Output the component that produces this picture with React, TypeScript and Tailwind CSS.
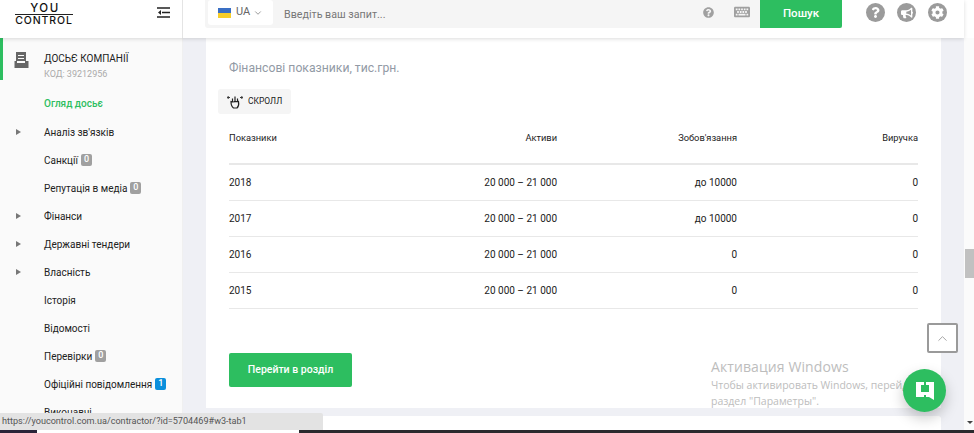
import React from 'react'
import { FaQuestionCircle, FaKeyboard, FaBullhorn, FaCog, FaQuestion } from 'react-icons/fa'
import { LuChevronDown, LuChevronUp } from 'react-icons/lu'

const rows = [
  { year: '2018', assets: '20 000 – 21 000', debts: 'до 10000', income: '0' },
  { year: '2017', assets: '20 000 – 21 000', debts: 'до 10000', income: '0' },
  { year: '2016', assets: '20 000 – 21 000', debts: '0', income: '0' },
  { year: '2015', assets: '20 000 – 21 000', debts: '0', income: '0' },
]

const menu = [
  { label: 'Аналіз зв\'язків', arrow: true },
  { label: 'Санкції', badge: '0' },
  { label: 'Репутація в медіа', badge: '0' },
  { label: 'Фінанси', arrow: true },
  { label: 'Державні тендери', arrow: true },
  { label: 'Власність', arrow: true },
  { label: 'Історія' },
  { label: 'Відомості' },
  { label: 'Перевірки', badge: '0' },
  { label: 'Офіційні повідомлення', badge: '1', blue: true },
  { label: 'Виконавчі' },
]

function Logo() {
  return (
    <div className="flex w-[58px] flex-col items-center font-['Inter',sans-serif] font-medium leading-none text-[#111]">
      <div className="h-[12px] pl-[2px] text-[11.5px] leading-[13px] tracking-[1.6px]">YOU</div>
      <div className="h-px w-full bg-[#222]" />
      <div className="mt-[1px] whitespace-nowrap text-[10.5px] leading-[10px] tracking-[0.9px]">CONTROL</div>
    </div>
  )
}

function Header() {
  return (
    <div className="relative z-10 flex h-[38px] w-[964px] shrink-0 bg-white shadow-[0_1px_4px_rgba(0,0,0,0.14)]">
      <div className="flex h-full w-[183px] shrink-0 items-start justify-between border-r border-[#e4e4e4] pl-[15px] pr-[12px]">
        <div className="mt-[2px]"><Logo /></div>
        <svg width="13" height="11" viewBox="0 0 13 11" className="mt-[7px]">
          <path d="M0 1h13M5 5.500h8M0 10h13" stroke="#222" strokeWidth="1.6" />
          <path d="M4 3 1 5.500 4 8z" fill="#222" />
        </svg>
      </div>
      <div className="ml-[22px] flex h-[28px] w-[637px] items-start rounded-bl-[3px] bg-[#f5f5f5]">
        <div className="ml-[3px] flex h-[25px] w-[65px] shrink-0 items-center rounded-[3px] bg-white pl-[10px]">
          <div className="h-[10px] w-[13px] bg-[linear-gradient(#3a6fc4_50%,#f7ce2a_50%)]" />
          <span className="ml-[5px] text-[11px] text-[#666]">UA</span>
          <LuChevronDown className="ml-[3px] text-[#888]" size={10} />
        </div>
        <div className="ml-[11px] mt-[7px] w-[419px] shrink-0 text-[10.7px] text-[#777]">Введіть ваш запит...</div>
        <div className="mt-[7px] shrink-0 text-[#a0a0a0]"><FaQuestionCircle size={11} /></div>
        <div className="ml-[20px] mt-[4px] shrink-0 text-[#a0a0a0]"><FaKeyboard size={16} /></div>
        <div className="ml-[10px] flex h-[28px] w-[82px] shrink-0 items-center justify-center rounded-br-[2px] bg-[#2dbe60] text-[11.5px] font-medium text-white">Пошук</div>
      </div>
      <div className="ml-[24px] mt-[3px] flex h-[19px] items-center gap-[12px]">
        <div className="flex h-[19px] w-[19px] items-center justify-center rounded-full bg-[#9b9b9b] text-white"><FaQuestion size={11} /></div>
        <div className="flex h-[19px] w-[19px] items-center justify-center rounded-full bg-[#9b9b9b] text-white"><FaBullhorn size={12} /></div>
        <div className="flex h-[19px] w-[19px] items-center justify-center rounded-full bg-[#9b9b9b] text-white"><FaCog size={13} /></div>
      </div>
    </div>
  )
}

function Sidebar() {
  return (
    <div className="h-full w-[183px] shrink-0 overflow-hidden border-r border-[#f0f0f0] bg-[#fafafa]">
      <div className="flex h-[42px] border-l-[3px] border-[#2dbe60]">
        <svg width="15" height="16" viewBox="0 0 15 16" className="ml-[11px] mt-[14px] shrink-0">
          <path d="M2 0h10v9h2.500v7H.5V9H2z" fill="#666" />
          <path d="M4 3h6v1H4zM4 6h6v1H4zM3 9h8v2H3z" fill="#fafafa" />
        </svg>
        <div className="ml-[15px] mt-[14px]">
          <div className="whitespace-nowrap text-[10px] leading-[14px] text-[#222]">ДОСЬЄ КОМПАНІЇ</div>
          <div className="mt-[2px] text-[9px] leading-[12px] text-[#aaa]">КОД: 39212956</div>
        </div>
      </div>
      <div className="mt-[10px] h-[28px] pl-[44px] text-[10px] font-medium leading-[28px] text-[#2dbe60]">Огляд досьє</div>
      {menu.map((item) => (
        <div key={item.label} className="flex h-[28px] items-center pl-[16px] text-[10px] text-[#222]">
          <div className="w-[28px] shrink-0">
            {item.arrow && <div className="h-0 w-0 border-y-[3.5px] border-l-[5px] border-y-transparent border-l-[#777]" />}
          </div>
          <span className="whitespace-nowrap">{item.label}</span>
          {item.badge && (
            <span className={`ml-[3px] flex h-[12px] w-[11px] items-center justify-center rounded-[2px] text-[9px] font-medium text-white ${item.blue ? 'bg-[#0a8fdc]' : 'bg-[#a0a0a0]'}`}>{item.badge}</span>
          )}
        </div>
      ))}
    </div>
  )
}

function ScrollHint() {
  return (
    <div className="ml-[-11px] mt-[13px] flex h-[25px] w-[73px] items-center rounded-[3px] bg-[#f5f5f5] pl-[9px]">
      <svg width="16" height="14" viewBox="0 0 16 14" fill="none" stroke="#222" strokeWidth="1.2">
        <path d="M5.500 7V3.500M8 6.500V1.500M10.500 7V3.500M5.500 7 4 6.500C4 9.500 5 12 6.500 13h3.500c1.500-1.500 2-4 1.500-6.500z" />
        <path d="M.5 2.500h2.500M1.500 1 .5 2.500 1.500 4M13 2.500h2.500M14.500 1l1 1.500-1 1.500" strokeWidth="0.9" />
      </svg>
      <span className="ml-[5px] text-[8.5px] text-[#222]">СКРОЛЛ</span>
    </div>
  )
}

function FinanceTable() {
  return (
    <div className="mt-[9px] w-[689px] text-[10px] text-[#222]">
      <div className="grid h-[42px] grid-cols-[148px_180px_180px_181px] items-start border-b-2 border-[#e8e8e8] pt-[8px] text-[9.3px]">
        <div>Показники</div>
        <div className="text-right">Активи</div>
        <div className="text-right">Зобов'язання</div>
        <div className="text-right">Виручка</div>
      </div>
      {rows.map((row) => (
        <div key={row.year} className="grid h-[36px] grid-cols-[148px_180px_180px_181px] items-center border-b border-[#e8e8e8]">
          <div>{row.year}</div>
          <div className="text-right">{row.assets}</div>
          <div className="text-right">{row.debts}</div>
          <div className="text-right">{row.income}</div>
        </div>
      ))}
    </div>
  )
}

export default function App() {
  return (
    <div className="relative flex h-[433px] w-[974px] flex-col overflow-hidden bg-white font-['Roboto',sans-serif]">
      <Header />
      <div className="flex h-[392px] w-[964px] bg-[#eff0f5]">
        <Sidebar />
        <div className="ml-[23px] w-[735px] shrink-0">
          <div className="h-[370px] bg-white pl-[23px] pt-[23px]">
            <div className="text-[12.2px] leading-[15px] text-[#929aa5]">Фінансові показники, тис.грн.</div>
            <ScrollHint />
            <FinanceTable />
            <div className="mt-[44px] flex h-[34px] w-[123px] items-center justify-center rounded-[2px] bg-[#2dbe60] text-[10.5px] font-medium text-white">Перейти в розділ</div>
          </div>
          <div className="mt-[8px] h-[14px] rounded-t-[3px] bg-white" />
        </div>
      </div>
      <div className="flex h-[3px] w-full">
        <div className="w-[37px] bg-[#2a2338]" />
        <div className="w-[262px] bg-white" />
        <div className="flex-1 bg-[#2a2a2e]" />
      </div>

      {/* page scrollbar */}
      <div className="absolute right-0 top-[38px] h-[392px] w-[10px] bg-[#fbfbfb]">
        <div className="absolute left-[1px] top-[211px] h-[29px] w-[9px] bg-[#c1c1c1]" />
        <div className="absolute bottom-[6px] left-[3px] h-0 w-0 border-x-[3px] border-t-[3px] border-x-transparent border-t-[#444]" />
      </div>

      {/* scroll to top */}
      <div className="absolute left-[927px] top-[323px] flex h-[30px] w-[31px] items-center justify-center rounded-[2px] border-2 border-[#9a9a9a] bg-white text-[#999]">
        <LuChevronUp size={15} strokeWidth={1.4} />
      </div>

      {/* windows watermark */}
      <div className="absolute left-[711px] top-[357px] font-['Open_Sans',sans-serif] text-[#bdbdbd]">
        <div className="text-[14px] leading-[19px] tracking-[0.1px]">Активация Windows</div>
        <div className="mt-[1px] w-[240px] text-[10.5px] leading-[16px]">Чтобы активировать Windows, перейдите в<br />раздел "Параметры".</div>
      </div>

      {/* chat button */}
      <div className="absolute left-[903px] top-[369px] flex h-[43px] w-[43px] items-center justify-center rounded-full bg-[#2dbe60] shadow-[0_6px_14px_rgba(0,0,0,0.22)]">
        <svg width="18" height="18" viewBox="0 0 18 18">
          <path fillRule="evenodd" d="M0 0h8v3h2V0h8v18l-5-3h-3v-2H8v2H0zM5 3v7h8V3z" fill="#fff" />
        </svg>
      </div>

      {/* browser status bar */}
      <div className="absolute bottom-[3px] left-0 h-[17px] w-[323px] rounded-tr-[2px] bg-[#e3e3e3] pl-[2px] text-[9.1px] leading-[17px] text-[#555]">https://youcontrol.com.ua/contractor/?id=5704469#w3-tab1</div>
    </div>
  )
}
